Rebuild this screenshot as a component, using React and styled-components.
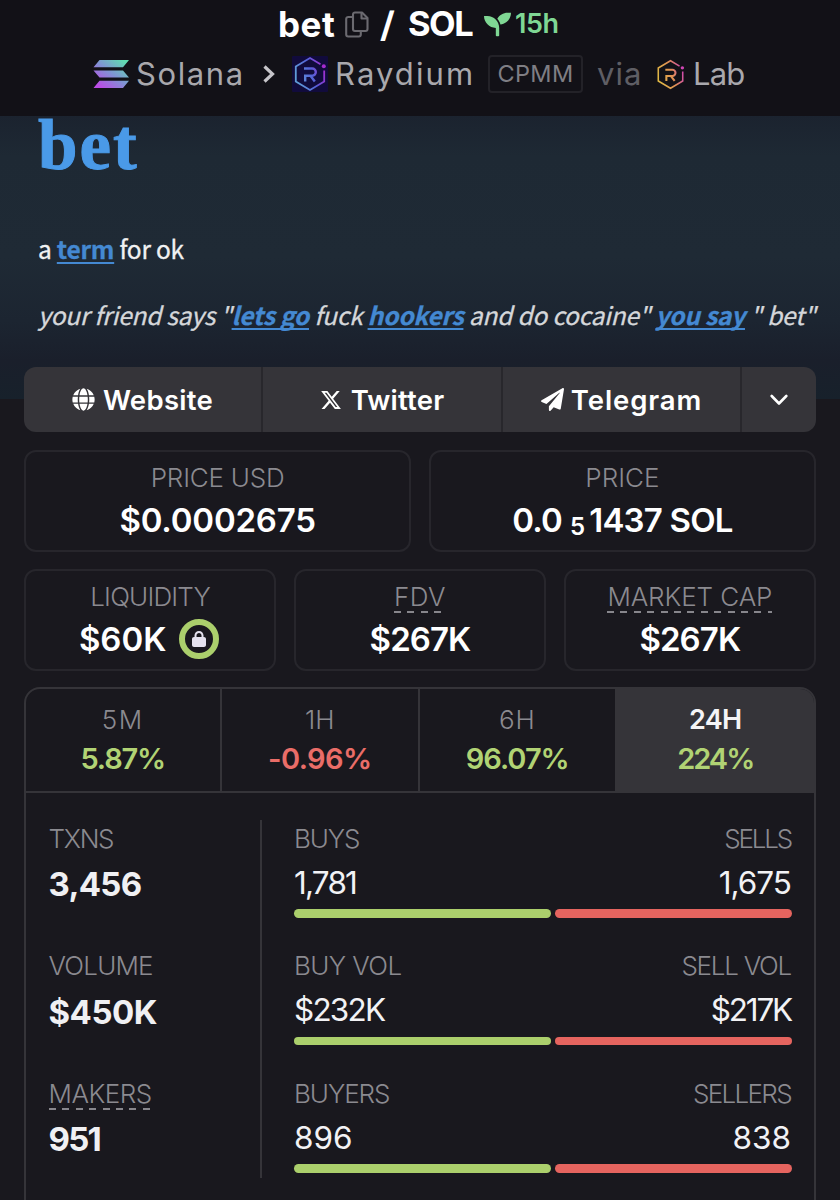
import React from 'react';
import styled, { createGlobalStyle, css } from 'styled-components';
import { FaGlobe, FaPaperPlane, FaSeedling } from 'react-icons/fa';
import { FaLock, FaXTwitter } from 'react-icons/fa6';

const GlobalStyle = createGlobalStyle`
    * {
        box-sizing: border-box;
    }
    body {
        margin: 0;
        background: #19181e;
        color: #fff;
        font-family: Inter, "Liberation Sans", sans-serif;
        overflow: hidden;
    }
`;

const Page = styled.div`
    width: 840px;
    height: 1200px;
    overflow: hidden;
    background: #19181e;
`;

/* ---------- header ---------- */

const Header = styled.header`
    height: 116px;
    background: #121117;
`;

const PairRow = styled.div`
    display: flex;
    align-items: center;
    height: 48px;
    padding-left: 278px;
    font-size: 35px;
    font-weight: 700;
    line-height: 48px;
`;

const PairName = styled.span`
    width: 67px;
    letter-spacing: 0.5px;
`;

const Slash = styled.span`
    width: 27px;
    margin-left: 5px;
    font-weight: 600;
    text-align: center;
    transform: scaleX(1.15);
`;

const Quote = styled.span`
    width: 76px;
    margin-left: 7px;
    font-size: 34.5px;
    letter-spacing: -1.5px;
`;

const Age = styled.span`
    display: flex;
    align-items: center;
    gap: 4px;
    color: #7fd794;
    font-size: 27px;
    font-weight: 600;
    letter-spacing: -0.5px;
`;

const ChainRow = styled.div`
    display: flex;
    align-items: center;
    height: 52px;
    padding-left: 93px;
    color: #a9a8ad;
    font-size: 31px;
    line-height: 52px;
`;

const ChainName = styled.span`
    width: ${p => p.$width}px;
    margin-left: 7px;
    letter-spacing: ${p => p.$track}px;
    white-space: nowrap;
`;

const PoolTag = styled.span`
    width: 95px;
    height: 38px;
    margin-left: 15px;
    border: 2px solid #232228;
    border-radius: 4px;
    color: #7f7e84;
    font-size: 23.5px;
    line-height: 34px;
    letter-spacing: 0.4px;
    text-align: center;
`;

const Via = styled.span`
    width: 58px;
    margin-left: 14px;
    color: #5f5e64;
    letter-spacing: 1px;
`;

/* ---------- banner ---------- */

const Banner = styled.section`
    height: 283px;
    padding-left: 38px;
    background: linear-gradient(#1b232f 0, #1e2934 40px, #1f2a35 140px, #1c2531 205px, #1a1f2b 245px, #17212b 283px);
    font-family: "Noto Sans CJK SC", "Noto Sans", sans-serif;
    font-size: 24.5px;
    white-space: nowrap;
`;

const Word = styled.h1`
    margin: 0;
    height: 108px;
    color: #4a9ae8;
    font-family: "Liberation Serif", serif;
    font-size: 71px;
    font-weight: 700;
    line-height: 59px;
    letter-spacing: 2px;
    -webkit-text-stroke: 1px #4a9ae8;
`;

const Meaning = styled.p`
    margin: 0;
    height: 66px;
    color: #f0f1f2;
    line-height: 50px;
    letter-spacing: -0.25px;
    -webkit-text-stroke: 0.3px currentColor;
`;

const Usage = styled.p`
    margin: 0;
    color: #d5d7da;
    font-style: italic;
    line-height: 49px;
    letter-spacing: -0.21px;
    -webkit-text-stroke: 0.3px currentColor;
`;

const Term = styled.a`
    color: #4489d2;
    font-weight: 700;
    text-decoration: underline;
    text-decoration-thickness: 2px;
    text-underline-offset: 3px;
    text-decoration-skip-ink: none;
`;

/* ---------- links ---------- */

const LinkBar = styled.nav`
    position: relative;
    display: grid;
    grid-template-columns: 239px 240px 239px 74px;
    height: 65px;
    margin: -32px 24px 0;
    border-radius: 12px;
    background: #353439;
    overflow: hidden;
`;

const LinkButton = styled.a`
    display: flex;
    align-items: center;
    justify-content: center;
    gap: ${p => p.$gap || 8}px;
    border-right: ${p => (p.$last ? 0 : 2)}px solid #28272c;
    font-size: 27.5px;
    font-weight: 600;
    letter-spacing: ${p => p.$track || 0}px;
`;

/* ---------- cards ---------- */

const Cards = styled.div`
    display: grid;
    grid-template-columns: repeat(${p => p.$columns}, 1fr);
    gap: 17.5px;
    margin: 18px 24px 0;

    & + & {
        margin-top: 17px;
    }
`;

const Card = styled.div`
    display: flex;
    flex-direction: column;
    align-items: center;
    height: 102px;
    padding-top: 10.5px;
    border: 2px solid #27262c;
    border-radius: 12px;
`;

const dashes = css`
    padding-bottom: 1px;
    margin-bottom: -1px;
    background: repeating-linear-gradient(90deg, #87868c 0 7px, transparent 7px 13.4px) 0 100% / 100% 2px no-repeat;
`;

const Label = styled.span`
    display: inline-block;
    color: #8b8a90;
    font-size: 26px;
    font-weight: 300;
    line-height: 30px;
    letter-spacing: ${p => p.$track || 0}px;
    white-space: nowrap;
    ${p => p.$dashed && dashes}
`;

const CardValue = styled.div`
    display: flex;
    align-items: center;
    margin-top: 7px;
    font-size: 33px;
    font-weight: 600;
    line-height: 40px;
    letter-spacing: ${p => p.$track || 0}px;
    white-space: pre;
`;

const Zeros = styled.span`
    height: 40px;
    margin: 0 5px 0 8px;
    font-size: 24px;
    line-height: 54px;
`;

const LockRing = styled.span`
    display: flex;
    align-items: center;
    justify-content: center;
    width: 40px;
    height: 40px;
    margin: 0 2px 0 13px;
    border: 6.5px solid #abcf6c;
    border-radius: 50%;
    color: #e4e1ee;
`;

/* ---------- stats panel ---------- */

const Panel = styled.section`
    height: 530px;
    margin: 16px 24px 0;
    border: 2px solid #353439;
    border-radius: 16px;
    overflow: hidden;
`;

const Tabs = styled.div`
    display: grid;
    grid-template-columns: 195.5px 198.5px 196.5px 1fr;
    height: 104px;
    border-bottom: 2px solid #353439;
`;

const Tab = styled.div`
    display: flex;
    flex-direction: column;
    align-items: center;
    padding-top: 15.5px;
    border-right: ${p => (p.$active ? 0 : 2)}px solid #353439;
    background: ${p => (p.$active ? '#353439' : 'transparent')};
    ${Label} {
        ${p => p.$active && 'color: #f4f4f6; font-weight: 600; font-size: 27px;'}
    }
`;

const Change = styled.span`
    margin-top: 9px;
    color: ${p => (p.$down ? '#ea6d68' : '#b1d374')};
    font-size: 29px;
    font-weight: 600;
    line-height: 30px;
    letter-spacing: ${p => p.$track}px;
`;

const Stats = styled.div`
    display: flex;
    height: 385px;
    padding: 27px 22px 0 22.5px;
`;

const Totals = styled.div`
    width: 213px;
    height: 358px;
    padding-top: 3.5px;
    border-right: 2px solid #353439;
`;

const Splits = styled.div`
    flex: 1;
    margin-left: 32.5px;
    padding-top: 3.5px;
`;

const StatRow = styled.div`
    height: 127.7px;
`;

const Total = styled.div`
    margin-top: 10.5px;
    color: #f0f0f3;
    font-size: 33px;
    font-weight: 700;
    line-height: 40px;
    letter-spacing: ${p => p.$track}px;
`;

const Sides = styled.div`
    display: flex;
    justify-content: space-between;
`;

const Amount = styled.span`
    margin-top: 9px;
    color: #f2f2f5;
    font-size: 31.5px;
    line-height: 40px;
    letter-spacing: ${p => p.$track}px;
`;

/* tightened text would otherwise run past the right edge */
const Side = styled.div`
    display: flex;
    flex-direction: column;
    align-items: ${p => (p.$right ? 'flex-end' : 'flex-start')};
    ${Label}, ${Amount} {
        ${p => p.$right && 'padding-right: 1px;'}
    }
`;

const Meter = styled.div`
    display: flex;
    gap: 4.5px;
    margin-top: 6.5px;
`;

const MeterPart = styled.div`
    flex: ${p => p.$share} 0 0;
    height: 8.5px;
    border-radius: 5px;
    background: ${p => (p.$sell ? '#e5645f' : '#abcf6c')};
`;

/* ---------- icons ---------- */

const CopyIcon = () => (
    <svg width="24" height="27" viewBox="0 0 24 27" fill="none" stroke="#6b6a70" strokeWidth="2.1" strokeLinejoin="round">
        <path d="M10 1.5h7l5.5 5.5v11a2 2 0 0 1-2 2H10a2 2 0 0 1-2-2V3.5a2 2 0 0 1 2-2z" />
        <path d="M16.5 1.5V7.5h6" />
        <path d="M8 6H3.2a2 2 0 0 0-2 2v15.500a2 2 0 0 0 2 2h10.600a2 2 0 0 0 2-2V20" />
    </svg>
);

const SolanaIcon = () => (
    <svg width="36" height="28" viewBox="0 0 36 28">
        <defs>
            <linearGradient id="sol" x1="30" y1="0" x2="8" y2="28" gradientUnits="userSpaceOnUse">
                <stop offset="0" stopColor="#5fdcb0" />
                <stop offset="0.5" stopColor="#8193d4" />
                <stop offset="1" stopColor="#bb4ce6" />
            </linearGradient>
        </defs>
        <path fill="url(#sol)" d="M6.5 0H36l-6 7.300H.5zM.5 10.400H30l6 7.200H6.500zM6.500 20.700H36L30 28H.5z" />
    </svg>
);

const Arrow = styled.svg`
    margin-right: 17px;
`;

const ArrowIcon = () => (
    <Arrow width="12" height="18" viewBox="0 0 12 18" fill="none" stroke="#c6c5ca" strokeWidth="3.2">
        <path d="M1.5 1.5L9.500 9l-8 7.500" />
    </Arrow>
);

const RaydiumIcon = ({ id, size, from, mid, to, back }) => (
    <svg width={size} height={size} viewBox="0 0 36 36" fill="none">
        <defs>
            <linearGradient id={id} x1="4" y1="22" x2="33" y2="13" gradientUnits="userSpaceOnUse">
                <stop offset="0" stopColor={from} />
                <stop offset="0.55" stopColor={mid} />
                <stop offset="1" stopColor={to} />
            </linearGradient>
        </defs>
        {back && <rect width="36" height="36" rx="1" fill={back} />}
        <g stroke={`url(#${id})`} strokeWidth="1.8">
            <path d="M32.2 14.5v11L18 34 3.800 25.500v-15L18 2l10.500 6.300" />
            <path strokeWidth="2.4" d="M12 12.500h8.200a3.600 3.600 0 0 1 0 7.200H13.200V25.500M18.500 19.800l4.300 5.700" />
        </g>
        <circle cx="31.8" cy="10.3" r="2" fill={to} />
    </svg>
);

const ChevronIcon = () => (
    <svg width="18" height="12" viewBox="0 0 18 12" fill="none" stroke="#fff" strokeWidth="2.6" strokeLinecap="round" strokeLinejoin="round">
        <path d="M1.7 2L9 9.500 16.300 2" />
    </svg>
);

/* ---------- data ---------- */

const tabs = [
    { name: '5M', change: '5.87%', nameTrack: 1.5, track: -1.2 },
    { name: '1H', change: '-0.96%', nameTrack: 0, track: -0.6, down: true },
    { name: '6H', change: '96.07%', nameTrack: 0.8, track: -1 },
    { name: '24H', change: '224%', nameTrack: -0.7, track: -2, active: true }
];

const totals = [
    { label: 'TXNS', value: '3,456', labelTrack: -1.3, track: -0.7 },
    { label: 'VOLUME', value: '$450K', labelTrack: -0.8, track: -0.5 },
    { label: 'MAKERS', value: '951', labelTrack: -0.5, track: -1.7, dashed: true }
];

const splits = [
    [
        { label: 'BUYS', value: '1,781', labelTrack: -1.1, track: -1.8 },
        { label: 'SELLS', value: '1,675', labelTrack: -2.2, track: -1 }
    ],
    [
        { label: 'BUY VOL', value: '$232K', labelTrack: -0.6, track: -1.8 },
        { label: 'SELL VOL', value: '$217K', labelTrack: -1.25, track: -2.2 }
    ],
    [
        { label: 'BUYERS', value: '896', labelTrack: -1.05, track: 0 },
        { label: 'SELLERS', value: '838', labelTrack: -1.65, track: 0 }
    ]
];

export default function App() {
    return (
        <Page>
            <GlobalStyle />
            <Header>
                <PairRow>
                    <PairName>bet</PairName>
                    <CopyIcon />
                    <Slash>/</Slash>
                    <Quote>SOL</Quote>
                    <Age>
                        <FaSeedling size={27} />
                        15h
                    </Age>
                </PairRow>
                <ChainRow>
                    <SolanaIcon />
                    <ChainName $width={127} $track={1.6}>Solana</ChainName>
                    <ArrowIcon />
                    <RaydiumIcon id="ray" size={36} from="#5f9fd8" mid="#5560d8" to="#a52bd0" back="#110b3c" />
                    <ChainName $width={138} $track={2.1}>Raydium</ChainName>
                    <PoolTag>CPMM</PoolTag>
                    <Via>via</Via>
                    <RaydiumIcon id="lab" size={31} from="#e0b845" mid="#e08f55" to="#cf45b4" />
                    <ChainName $width={60} $track={-0.8}>Lab</ChainName>
                </ChainRow>
            </Header>

            <Banner>
                <Word>bet</Word>
                <Meaning>a <Term>term</Term> for ok</Meaning>
                <Usage>
                    your friend says "<Term>lets go</Term> fuck <Term>hookers</Term> and do cocaine" <Term>you say</Term> " bet"
                </Usage>
            </Banner>

            <LinkBar>
                <LinkButton $track={0.3}><FaGlobe size={23} />Website</LinkButton>
                <LinkButton $track={0.2} $gap={9}><FaXTwitter size={22} />Twitter</LinkButton>
                <LinkButton $track={0.9} $gap={7}><FaPaperPlane size={23} />Telegram</LinkButton>
                <LinkButton $last><ChevronIcon /></LinkButton>
            </LinkBar>

            <Cards $columns={2}>
                <Card>
                    <Label $track={-0.2}>PRICE USD</Label>
                    <CardValue $track={-0.2}>$0.0002675</CardValue>
                </Card>
                <Card>
                    <Label>PRICE</Label>
                    <CardValue $track={-0.8}>0.0<Zeros>5</Zeros>1437 SOL</CardValue>
                </Card>
            </Cards>

            <Cards $columns={3}>
                <Card>
                    <Label $track={-0.8}>LIQUIDITY</Label>
                    <CardValue>$60K<LockRing><FaLock size={16} /></LockRing></CardValue>
                </Card>
                <Card>
                    <Label $dashed $track={0.4}>FDV</Label>
                    <CardValue $track={-0.9}>$267K</CardValue>
                </Card>
                <Card>
                    <Label $dashed $track={-0.1}>MARKET CAP</Label>
                    <CardValue $track={-0.9}>$267K</CardValue>
                </Card>
            </Cards>

            <Panel>
                <Tabs>
                    {tabs.map(t => (
                        <Tab key={t.name} $active={t.active}>
                            <Label $track={t.nameTrack}>{t.name}</Label>
                            <Change $down={t.down} $track={t.track}>{t.change}</Change>
                        </Tab>
                    ))}
                </Tabs>
                <Stats>
                    <Totals>
                        {totals.map(t => (
                            <StatRow key={t.label}>
                                <Label $dashed={t.dashed} $track={t.labelTrack}>{t.label}</Label>
                                <Total $track={t.track}>{t.value}</Total>
                            </StatRow>
                        ))}
                    </Totals>
                    <Splits>
                        {splits.map(([buy, sell]) => (
                            <StatRow key={buy.label}>
                                <Sides>
                                    <Side>
                                        <Label $track={buy.labelTrack}>{buy.label}</Label>
                                        <Amount $track={buy.track}>{buy.value}</Amount>
                                    </Side>
                                    <Side $right>
                                        <Label $track={sell.labelTrack}>{sell.label}</Label>
                                        <Amount $track={sell.track}>{sell.value}</Amount>
                                    </Side>
                                </Sides>
                                <Meter>
                                    <MeterPart $share={52} />
                                    <MeterPart $share={48} $sell />
                                </Meter>
                            </StatRow>
                        ))}
                    </Splits>
                </Stats>
            </Panel>
        </Page>
    );
}
